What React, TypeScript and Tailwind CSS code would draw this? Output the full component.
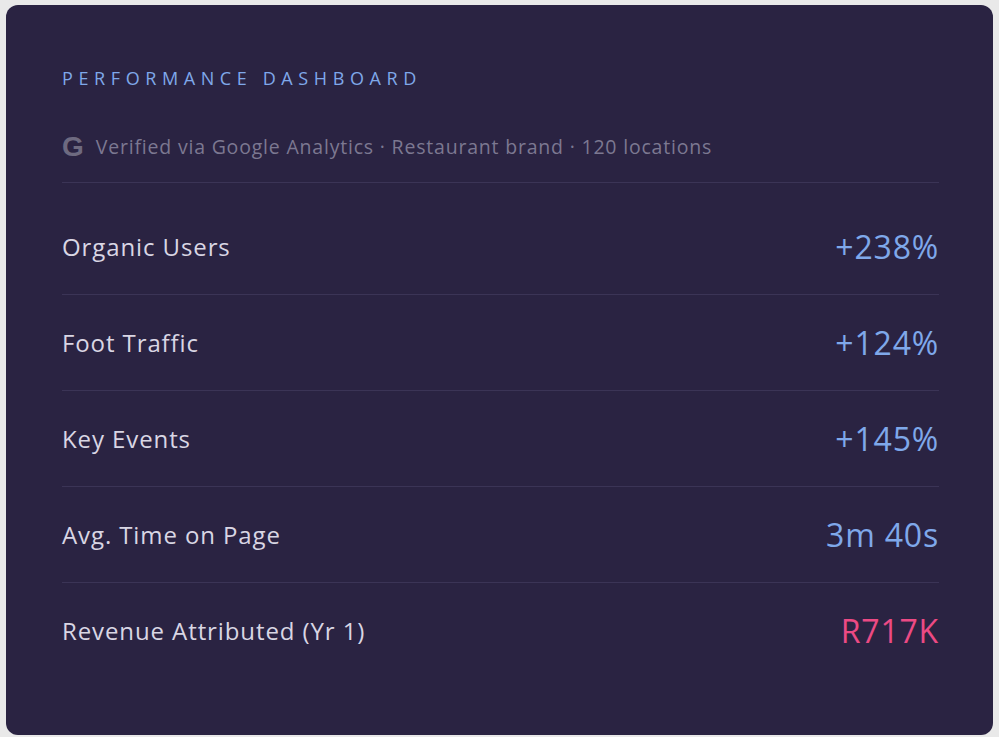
export default function App() {
  const rows: [string, string, string][] = [
    ["Organic Users", "+238%", "text-[#7fa8ea]"],
    ["Foot Traffic", "+124%", "text-[#7fa8ea]"],
    ["Key Events", "+145%", "text-[#7fa8ea]"],
    ["Avg. Time on Page", "3m 40s", "text-[#7fa8ea]"],
    ["Revenue Attributed (Yr 1)", "R717K", "text-[#ec4a84]"],
  ];
  return (
    <div className="min-h-[737px] bg-[#e9e9e9] pt-[5px] pl-[6px] pr-[6px] pb-[2px]" style={{ fontFamily: '"Open Sans", sans-serif' }}>
      <div className="h-[730px] rounded-[12px] bg-[#2a2342] pl-[56px] pr-[54px] pt-[59px]">
        <div className="text-[18px] tracking-[5.6px] text-[#7fa8ea] leading-[28px]">PERFORMANCE DASHBOARD</div>
        <div className="mt-[42px] flex items-center gap-[12px] pb-[22px] border-b border-[#3b3456]">
          <span className="text-[28px] font-bold text-[#6e6a80] leading-[26px]" style={{ fontFamily: '"Liberation Sans", sans-serif' }}>G</span>
          <span className="text-[19.5px] tracking-[0.8px] text-[#7c7891] leading-[26px]">Verified via Google Analytics · Restaurant brand · 120 locations</span>
        </div>
        {rows.map(([l, v, c], i) => (
          <div key={l} className={`flex items-center justify-between h-[96px] ${i === 0 ? "h-[112px] pt-[16px]" : ""} ${i < rows.length - 1 ? "border-b border-[#3b3456]" : ""}`}>
            <span className="text-[24px] tracking-[0.9px] text-[#d9d6e4]">{l}</span>
            <span className={`text-[32px] tracking-[0.8px] ${c}`}>{v}</span>
          </div>
        ))}
      </div>
    </div>
  );
}
